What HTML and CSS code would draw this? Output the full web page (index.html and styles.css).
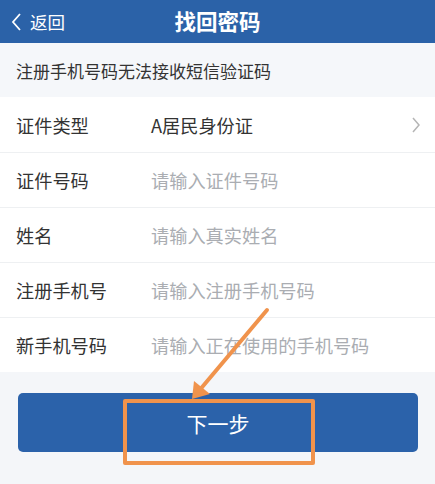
FILE: index.html
```html
<!DOCTYPE html>
<html lang="zh-CN">
<head>
<meta charset="utf-8">
<title>找回密码</title>
<link rel="stylesheet" href="styles.css">
</head>
<body>
<div class="page">
  <header class="topbar">
    <div class="back">
      <svg class="back-icon" width="12" height="20" viewBox="0 0 12 20"><path d="M10 2 L3 10 L10 18" fill="none" stroke="#fff" stroke-width="1.8"/></svg>
      <span>返回</span>
    </div>
    <h1 class="title">找回密码</h1>
  </header>
  <div class="notice">注册手机号码无法接收短信验证码</div>
  <div class="form">
    <div class="row">
      <span class="label">证件类型</span>
      <span class="value filled">A居民身份证</span>
      <svg class="chev" width="10" height="18" viewBox="0 0 10 18"><path d="M2 2 L8 9 L2 16" fill="none" stroke="#b5b5b5" stroke-width="1.5"/></svg>
    </div>
    <div class="row">
      <span class="label">证件号码</span>
      <span class="value">请输入证件号码</span>
    </div>
    <div class="row">
      <span class="label">姓名</span>
      <span class="value">请输入真实姓名</span>
    </div>
    <div class="row">
      <span class="label">注册手机号</span>
      <span class="value">请输入注册手机号码</span>
    </div>
    <div class="row">
      <span class="label">新手机号码</span>
      <span class="value">请输入正在使用的手机号码</span>
    </div>
  </div>
  <div class="actions">
    <button class="next">下一步</button>
  </div>
  <div class="mark-box"></div>
  <svg class="mark-arrow" width="435" height="484" viewBox="0 0 435 484">
    <line x1="267" y1="310" x2="198" y2="392" stroke="#f0934c" stroke-width="4" stroke-linecap="round"/>
    <polygon points="192,399 194,381 210,394" fill="#f0934c"/>
  </svg>
</div>
</body>
</html>
```

FILE: styles.css
```css
html, body {
  margin: 0;
  padding: 0;
}
body {
  font-family: "Noto Sans CJK SC", "Noto Sans", sans-serif;
  background: #f4f6f9;
}
.page {
  position: relative;
  width: 435px;
  height: 484px;
  overflow: hidden;
  background: #f4f6f9;
}
.topbar {
  height: 43px;
  background: #2b62a8;
  display: flex;
  align-items: center;
  justify-content: center;
  position: relative;
}
.back {
  position: absolute;
  left: 10px;
  top: 0;
  height: 43px;
  display: flex;
  align-items: center;
  gap: 8px;
  color: #fff;
  font-size: 17.5px;
}
.title {
  margin: 0 0 2px 0;
  color: #fff;
  font-size: 21.5px;
  font-weight: 700;
}
.notice {
  height: 54px;
  display: flex;
  align-items: center;
  padding-left: 16px;
  font-size: 17px;
  color: #333;
  background: #f5f7fa;
}
.form {
  background: #fff;
}
.row {
  height: 55px;
  display: flex;
  align-items: center;
  padding: 0 16px;
  border-top: 1px solid #eef0f2;
  box-sizing: border-box;
  font-size: 18.2px;
}
.row:first-child {
  border-top: none;
}
.label {
  width: 135px;
  color: #333;
}
.value {
  flex: 1;
  color: #aaadb2;
}
.value.filled {
  color: #333;
}
.chev {
  margin-right: -2px;
}
.actions {
  padding: 21px 17px 0 18px;
}
.next {
  width: 100%;
  height: 59px;
  border: none;
  border-radius: 5px;
  background: #2b62aa;
  color: #fff;
  font-family: inherit;
  font-size: 21px;
}
.mark-box {
  position: absolute;
  left: 123px;
  top: 399px;
  width: 192px;
  height: 66px;
  box-sizing: border-box;
  border: 4px solid #f0934c;
  border-radius: 2px;
}
.mark-arrow {
  position: absolute;
  left: 0;
  top: 0;
  pointer-events: none;
}
```
